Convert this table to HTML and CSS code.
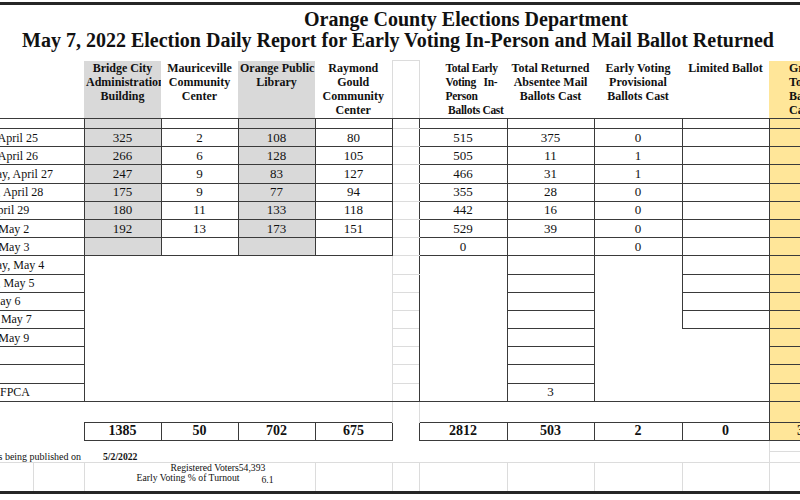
FILE: index.html
```html
<!DOCTYPE html>
<html lang="en">
<head>
    <meta charset="UTF-8">
    <meta name="viewport" content="width=device-width, initial-scale=1.0">
    <title>Orange County Elections Department - Daily Report</title>
    <link rel="stylesheet" href="styles.css">
</head>
<body>
<div class="sheet">
    <div class="title">
        <div class="title-top">Orange County Elections Department</div>
        <div class="title-main">May 7, 2022 Election Daily Report for Early Voting In-Person and Mail Ballot Returned</div>
    </div>

    <table class="report">
        <colgroup>
            <col class="c-lbl-a"><col class="c-lbl-b">
            <col class="c-site"><col class="c-site"><col class="c-site"><col class="c-site">
            <col class="c-gap">
            <col class="c-tot"><col class="c-tot2"><col class="c-tot"><col class="c-tot2">
            <col class="c-grand">
        </colgroup>

        <!-- column headings -->
        <tr class="r-head">
            <th class="hd" colspan="2"></th>
            <th class="hd shade">Bridge City<br>Administration<br>Building</th>
            <th class="hd">Mauriceville<br>Community<br>Center</th>
            <th class="hd shade">Orange Public<br>Library</th>
            <th class="hd">Raymond<br>Gould<br>Community<br>Center</th>
            <th class="hd hd-gap"></th>
            <th class="hd hd-left">Total Early<br>Voting&nbsp;&nbsp;&nbsp;In-<br>Person<br>&nbsp;Ballots Cast</th>
            <th class="hd">Total Returned<br>Absentee Mail<br>Ballots Cast</th>
            <th class="hd">Early Voting<br>Provisional<br>Ballots Cast</th>
            <th class="hd">Limited Ballot</th>
            <th class="hd grand hd-grand">Grand<br>Total<br>Ballots<br>Cast</th>
        </tr>

        <tr class="r-thin">
            <td class="lbl" colspan="2"></td>
            <td class="b shade"></td><td class="b"></td><td class="b shade"></td><td class="b"></td>
            <td class="gap"></td>
            <td class="b"></td><td class="b"></td><td class="b"></td><td class="b"></td>
            <td class="b grand"></td>
        </tr>

        <!-- early voting days -->
        <tr class="r-data">
            <td class="lbl" colspan="2">Monday, April 25</td>
            <td class="b shade">325</td><td class="b">2</td><td class="b shade">108</td><td class="b">80</td>
            <td class="gap"></td>
            <td class="b">515</td><td class="b">375</td><td class="b">0</td><td class="b"></td>
            <td class="b grand"></td>
        </tr>
        <tr class="r-data">
            <td class="lbl" colspan="2">Tuesday, April 26</td>
            <td class="b shade">266</td><td class="b">6</td><td class="b shade">128</td><td class="b">105</td>
            <td class="gap"></td>
            <td class="b">505</td><td class="b">11</td><td class="b">1</td><td class="b"></td>
            <td class="b grand"></td>
        </tr>
        <tr class="r-data">
            <td class="lbl" colspan="2">Wednesday, April 27</td>
            <td class="b shade">247</td><td class="b">9</td><td class="b shade">83</td><td class="b">127</td>
            <td class="gap"></td>
            <td class="b">466</td><td class="b">31</td><td class="b">1</td><td class="b"></td>
            <td class="b grand"></td>
        </tr>
        <tr class="r-data">
            <td class="lbl" colspan="2">Thursday, April 28</td>
            <td class="b shade">175</td><td class="b">9</td><td class="b shade">77</td><td class="b">94</td>
            <td class="gap"></td>
            <td class="b">355</td><td class="b">28</td><td class="b">0</td><td class="b"></td>
            <td class="b grand"></td>
        </tr>
        <tr class="r-data">
            <td class="lbl" colspan="2">Friday, April 29</td>
            <td class="b shade">180</td><td class="b">11</td><td class="b shade">133</td><td class="b">118</td>
            <td class="gap"></td>
            <td class="b">442</td><td class="b">16</td><td class="b">0</td><td class="b"></td>
            <td class="b grand"></td>
        </tr>
        <tr class="r-data">
            <td class="lbl" colspan="2">Monday, May 2</td>
            <td class="b shade">192</td><td class="b">13</td><td class="b shade">173</td><td class="b">151</td>
            <td class="gap"></td>
            <td class="b">529</td><td class="b">39</td><td class="b">0</td><td class="b"></td>
            <td class="b grand"></td>
        </tr>
        <tr class="r-data">
            <td class="lbl" colspan="2">Tuesday, May 3</td>
            <td class="b shade"></td><td class="b"></td><td class="b shade"></td><td class="b"></td>
            <td class="gap"></td>
            <td class="b">0</td><td class="b"></td><td class="b">0</td><td class="b"></td>
            <td class="b grand"></td>
        </tr>

        <!-- mail ballot days -->
        <tr class="r-data">
            <td class="lbl" colspan="2">Wednesday, May 4</td>
            <td class="blk" colspan="4" rowspan="8"></td>
            <td class="gap"></td>
            <td class="b" rowspan="8"></td>
            <td class="b"></td>
            <td class="blk-prov" rowspan="4"></td>
            <td class="b"></td>
            <td class="b grand"></td>
        </tr>
        <tr class="r-data">
            <td class="lbl" colspan="2">Thursday, May 5</td>
            <td class="gap"></td>
            <td class="b"></td>
            <td class="b"></td>
            <td class="b grand"></td>
        </tr>
        <tr class="r-data">
            <td class="lbl" colspan="2">Friday, May 6</td>
            <td class="gap"></td>
            <td class="b"></td>
            <td class="b"></td>
            <td class="b grand"></td>
        </tr>
        <tr class="r-data">
            <td class="lbl" colspan="2">Saturday, May 7</td>
            <td class="gap"></td>
            <td class="b"></td>
            <td class="b"></td>
            <td class="b grand"></td>
        </tr>
        <tr class="r-data">
            <td class="lbl" colspan="2">Monday, May 9</td>
            <td class="gap"></td>
            <td class="b"></td>
            <td class="blk-end" colspan="2" rowspan="4"></td>
            <td class="b grand"></td>
        </tr>
        <tr class="r-data">
            <td class="lbl" colspan="2"></td>
            <td class="gap"></td>
            <td class="b"></td>
            <td class="b grand"></td>
        </tr>
        <tr class="r-data">
            <td class="lbl" colspan="2"></td>
            <td class="gap"></td>
            <td class="b"></td>
            <td class="b grand"></td>
        </tr>
        <tr class="r-data">
            <td class="lbl" colspan="2">Returned FPCA</td>
            <td class="gap gap-last"></td>
            <td class="b">3</td>
            <td class="b grand"></td>
        </tr>

        <tr class="r-gap">
            <td colspan="2"></td>
            <td colspan="4"></td>
            <td class="gap-side"></td>
            <td colspan="4"></td>
            <td class="b grand"></td>
        </tr>

        <!-- totals -->
        <tr class="r-total">
            <td colspan="2"></td>
            <td class="b sum">1385</td><td class="b sum">50</td><td class="b sum">702</td><td class="b sum">675</td>
            <td></td>
            <td class="b sum">2812</td><td class="b sum">503</td><td class="b sum">2</td><td class="b sum">0</td>
            <td class="b grand sum">3317</td>
        </tr>

        <tr class="r-pub">
            <td colspan="11"></td>
            <td class="off off-line"></td>
        </tr>
        <tr class="r-pub">
            <td class="pub" colspan="2">Results being published on</td>
            <td class="pub-date">5/2/2022</td>
            <td colspan="8"></td>
            <td class="off"></td>
        </tr>

        <tr class="r-reg">
            <td class="rc"></td>
            <td class="rc"></td>
            <td class="rc reg" colspan="3">
                <div class="reg-line1">Registered Voters54,393</div>
                <div class="reg-line2">Early Voting % of Turnout<span class="reg-pct">6.1</span></div>
            </td>
            <td class="rc"></td>
            <td class="rc"></td>
            <td class="rc"></td>
            <td class="rc"></td>
            <td class="rc"></td>
            <td class="rc"></td>
            <td class="rc"></td>
        </tr>
    </table>
</div>
</body>
</html>
```

FILE: styles.css
```css
html, body {
    margin: 0;
    overflow: hidden;
    background-color: #fff;
}
body {
    width: 800px;
    height: 500px;
    font-family: "Liberation Serif", "Times New Roman", serif;
    color: #111;
}
.sheet {
    margin-top: 2px;
    border-top: 3px solid #262626;
    border-bottom: 3px solid #262626;
}
.title {
    box-sizing: border-box;
    height: 55px;
    padding-top: 4px;
    font-size: 20px;
    font-weight: bold;
    line-height: 21px;
    white-space: nowrap;
}
.title-top {
    width: 932px;
    text-align: center;
}
.title-main {
    width: 796px;
    text-align: center;
}

/* spreadsheet grid */
.report {
    margin-left: -48px;
    width: 901px;
    table-layout: fixed;
    border-collapse: collapse;
    font-size: 13px;
}
.c-lbl-a { width: 81px; }
.c-lbl-b { width: 51px; }
.c-site { width: 77px; }
.c-gap { width: 27px; }
.c-tot { width: 88px; }
.c-tot2 { width: 87px; }
.c-grand { width: 84px; }

.report td, .report th {
    padding: 0 2px;
    overflow: hidden;
    white-space: nowrap;
    text-align: center;
    line-height: 14px;
}
.r-head { height: 58px; }
.r-thin { height: 10px; }
.r-data { height: 18.2px; }
.r-gap { height: 21px; }
.r-total { height: 18px; }
.r-pub { height: 11px; }
.r-reg { height: 28px; }

.hd {
    vertical-align: top;
    padding-top: 1px;
    font-size: 12px;
    font-weight: bold;
    line-height: 13.7px;
    border-bottom: 1px solid #3a3a3a;
}
.report .hd-left {
    text-align: left;
    padding-left: 26px;
    font-size: 11.5px;
    letter-spacing: -0.3px;
}
.report .hd-grand {
    text-align: left;
    padding-left: 20px;
}
.hd-gap {
    border: 1px solid #dcdcdc;
    border-bottom-color: #3a3a3a;
}

.b { border: 1px solid #3a3a3a; }
.shade { background-color: #d9d9d9; }
.grand { background-color: #ffe699; }
.sum {
    font-size: 14px;
    font-weight: bold;
}

.report .lbl {
    text-align: left;
    padding-left: 1px;
    font-size: 12px;
    border-top: 1px solid #3a3a3a;
    border-bottom: 1px solid #3a3a3a;
}
.gap {
    border-top: 1px solid #dcdcdc;
    border-bottom: 1px solid #dcdcdc;
}
.gap-last { border-bottom-color: #3a3a3a; }
.gap-side {
    border-left: 1px solid #dcdcdc;
    border-right: 1px solid #dcdcdc;
}

/* merged empty blocks */
.blk {
    border-left: 1px solid #3a3a3a;
    border-top: 1px solid #3a3a3a;
    border-bottom: 1px solid #3a3a3a;
    border-right: 1px solid #dcdcdc;
}
.blk-prov { border-left: 1px solid #3a3a3a; }
.blk-end {
    border-left: 1px solid #3a3a3a;
    border-bottom: 1px solid #3a3a3a;
}

/* footer area */
.off { border-left: 1px solid #dcdcdc; }
.off-line { border-bottom: 1px solid #dcdcdc; }
.report .pub {
    text-align: right;
    padding-right: 3px;
    font-size: 10px;
    line-height: 11px;
}
.report .pub-date {
    text-align: left;
    padding-left: 19px;
    font-size: 9.7px;
    font-weight: bold;
    line-height: 11px;
}
.rc {
    border-top: 1px solid #dcdcdc;
    border-right: 1px solid #dcdcdc;
}
.report .reg {
    text-align: left;
    vertical-align: top;
    font-size: 9.7px;
    line-height: 9.5px;
}
.reg-line1 { padding-left: 84px; }
.reg-line2 { padding-left: 50px; }
.reg-pct {
    display: inline-block;
    margin-left: 22px;
    vertical-align: -2px;
}
```
